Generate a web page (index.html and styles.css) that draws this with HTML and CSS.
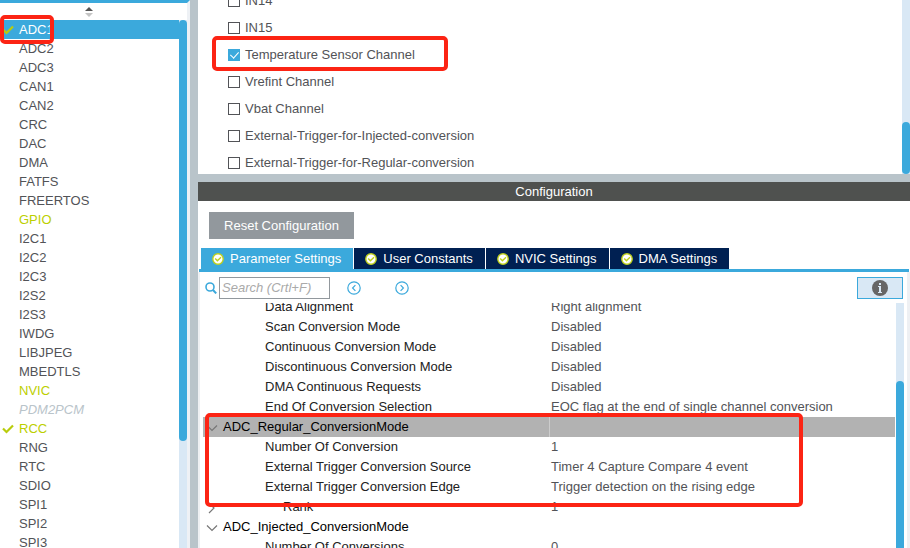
FILE: index.html
```html
<!DOCTYPE html>
<html lang="en">
<head>
<meta charset="utf-8">
<title>ADC1 Configuration</title>
<link rel="stylesheet" href="styles.css">
</head>
<body>
<svg class="defs" aria-hidden="true">
  <symbol id="tick" viewBox="0 0 12 10"><path d="M1 4.5 4.5 8 11 1.5" fill="none" stroke="#b9cc0c" stroke-width="2.2"/></symbol>
  <symbol id="ok" viewBox="0 0 12 12"><circle cx="6" cy="6" r="5.2" fill="#fff" stroke="#bfd11b" stroke-width="1.4"/><path d="M3.2 5.6 5.4 7.8 9 4.2" fill="none" stroke="#bfd11b" stroke-width="1.4"/></symbol>
  <symbol id="down" viewBox="0 0 12 12"><path d="M1 3.5 6 8.5 11 3.5" fill="none" stroke="#777" stroke-width="1.2"/></symbol>
  <symbol id="right" viewBox="0 0 12 12"><path d="M3 1 8 6 3 11" fill="none" stroke="#777" stroke-width="1.2"/></symbol>
</svg>
<div class="app">
  <aside class="sidebar">
    <button class="sort" aria-label="Sort"><svg width="8" height="10" viewBox="0 0 8 10"><path d="M0 4 4 0 8 4Z" fill="#555"/><path d="M0 6 4 10 8 6Z" fill="#c4c4c4"/></svg></button>
    <div class="side-body">
      <ul class="modules">
        <li class="selected"><svg class="tick"><use href="#tick"/></svg>ADC1</li>
        <li>ADC2</li>
        <li>ADC3</li>
        <li>CAN1</li>
        <li>CAN2</li>
        <li>CRC</li>
        <li>DAC</li>
        <li>DMA</li>
        <li>FATFS</li>
        <li>FREERTOS</li>
        <li class="on">GPIO</li>
        <li>I2C1</li>
        <li>I2C2</li>
        <li>I2C3</li>
        <li>I2S2</li>
        <li>I2S3</li>
        <li>IWDG</li>
        <li>LIBJPEG</li>
        <li>MBEDTLS</li>
        <li class="on">NVIC</li>
        <li class="off">PDM2PCM</li>
        <li class="on"><svg class="tick"><use href="#tick"/></svg>RCC</li>
        <li>RNG</li>
        <li>RTC</li>
        <li>SDIO</li>
        <li>SPI1</li>
        <li>SPI2</li>
        <li>SPI3</li>
      </ul>
      <div class="track"><div class="thumb thumb-side"></div></div>
    </div>
    <div class="mark mark-module"></div>
  </aside>
  <main class="main">
    <section class="mode">
      <div class="channels">
        <label><input type="checkbox">IN14</label>
        <label><input type="checkbox">IN15</label>
        <label><input type="checkbox" checked>Temperature Sensor Channel</label>
        <label><input type="checkbox">Vrefint Channel</label>
        <label><input type="checkbox">Vbat Channel</label>
        <label><input type="checkbox">External-Trigger-for-Injected-conversion</label>
        <label><input type="checkbox">External-Trigger-for-Regular-conversion</label>
      </div>
      <div class="track"><div class="thumb thumb-mode"></div></div>
      <div class="mark mark-channel"></div>
    </section>
    <h1 class="title">Configuration</h1>
    <section class="config">
      <button class="reset">Reset Configuration</button>
      <nav class="tabs">
        <button class="tab active"><svg class="ok"><use href="#ok"/></svg>Parameter Settings</button>
        <button class="tab"><svg class="ok"><use href="#ok"/></svg>User Constants</button>
        <button class="tab"><svg class="ok"><use href="#ok"/></svg>NVIC Settings</button>
        <button class="tab"><svg class="ok"><use href="#ok"/></svg>DMA Settings</button>
      </nav>
      <div class="panel">
        <div class="tools">
          <label class="glass" for="search"><svg width="12" height="12" viewBox="0 0 12 12" fill="none" stroke="#3ba9dc"><circle cx="5" cy="5" r="4" stroke-width="1.6"/><path d="M8 8 11.2 11.4" stroke-width="2"/></svg></label>
          <input id="search" class="search" type="text" placeholder="Search (Crtl+F)" aria-label="Search">
          <button class="step" aria-label="Previous"><svg width="14" height="14" viewBox="0 0 14 14" fill="none" stroke="#3ba9dc" stroke-width="1.2"><circle cx="7" cy="7" r="6.2"/><path d="M8.4 4.2 5.6 7l2.8 2.8"/></svg></button>
          <button class="step" aria-label="Next"><svg width="14" height="14" viewBox="0 0 14 14" fill="none" stroke="#3ba9dc" stroke-width="1.2"><circle cx="7" cy="7" r="6.2"/><path d="M5.6 4.2 8.4 7 5.6 9.8"/></svg></button>
          <button class="info" aria-label="Information"><svg width="16" height="16" viewBox="0 0 16 16"><circle cx="8" cy="8" r="8" fill="#666"/><path d="M7 3h2v2H7zM6 6h3v6h1v1H6v-1h1V7H6z" fill="#d9e8f5"/></svg></button>
        </div>
        <div class="grid-wrap">
          <div class="grid">
            <table>
              <colgroup><col class="c-name"><col></colgroup>
              <tbody>
                <tr><td>Data Alignment</td><td>Right alignment</td></tr>
                <tr><td>Scan Conversion Mode</td><td>Disabled</td></tr>
                <tr><td>Continuous Conversion Mode</td><td>Disabled</td></tr>
                <tr><td>Discontinuous Conversion Mode</td><td>Disabled</td></tr>
                <tr><td>DMA Continuous Requests</td><td>Disabled</td></tr>
                <tr><td>End Of Conversion Selection</td><td>EOC flag at the end of single channel conversion</td></tr>
                <tr class="group current"><th scope="row"><svg class="arrow"><use href="#down"/></svg>ADC_Regular_ConversionMode</th><td></td></tr>
                <tr><td>Number Of Conversion</td><td>1</td></tr>
                <tr><td>External Trigger Conversion Source</td><td>Timer 4 Capture Compare 4 event</td></tr>
                <tr><td>External Trigger Conversion Edge</td><td>Trigger detection on the rising edge</td></tr>
                <tr class="nested"><td><svg class="arrow"><use href="#right"/></svg>Rank</td><td>1</td></tr>
                <tr class="group"><th scope="row"><svg class="arrow"><use href="#down"/></svg>ADC_Injected_ConversionMode</th><td></td></tr>
                <tr><td>Number Of Conversions</td><td>0</td></tr>
              </tbody>
            </table>
          </div>
          <div class="track"><div class="thumb thumb-grid"></div></div>
          <div class="mark mark-regular"></div>
        </div>
      </div>
    </section>
  </main>
</div>
</body>
</html>
```
FILE: styles.css
```css
* { box-sizing: border-box; }

body {
  margin: 0;
  background: #fff;
  color: #525357;
  font: 13px/20px "Liberation Sans", Arial, sans-serif;
}

button, input { font: inherit; margin: 0; padding: 0; }
button { border: 0; background: none; cursor: pointer; }
svg { flex: none; display: block; }
.defs { position: absolute; width: 0; height: 0; }

.app { display: flex; height: 100vh; overflow: hidden; }

/* Module list */
.sidebar {
  position: relative;
  display: flex;
  flex-direction: column;
  flex: none;
  width: 190px;
  border-top: 3px solid #3ba9dc;
  border-right: 3px solid #eef1f5;
}
.sort {
  display: flex;
  justify-content: center;
  align-items: center;
  flex: none;
  height: 17px;
  padding-right: 10px;
}
.side-body { display: flex; flex: 1; min-height: 0; }
.modules { flex: 1; margin: 0; padding: 0; list-style: none; }
.modules li {
  display: flex;
  align-items: center;
  height: 19px;
  padding-left: 19px;
  line-height: 18px;
}
.modules .tick { width: 12px; height: 10px; margin: 0 5px 0 -17px; }
.modules .selected { background: #3ba9dc; color: #fff; }
.modules .on { color: #bccf00; }
.modules .off { color: #b9c4ca; font-style: italic; }

.track { flex: none; width: 8px; background: #d9e8f5; }
.thumb { border-radius: 4px; background: #3ba9dc; }
.thumb-side { height: 421px; }
.thumb-mode { height: 52px; }
.thumb-grid { height: 100%; border-radius: 4px 4px 0 0; }

/* Right side */
.main {
  display: flex;
  flex-direction: column;
  flex: 1;
  min-width: 0;
  border-left: 8px solid #b9c4ca;
}
.mode {
  position: relative;
  display: flex;
  flex: none;
  height: 174px;
  overflow: hidden;
}
.mode .track { display: flex; flex-direction: column; justify-content: flex-end; }
.channels { flex: 1; margin-top: -13px; padding-left: 30px; }
.channels label { display: flex; align-items: center; gap: 5px; height: 27px; }
.channels input {
  appearance: none;
  width: 12px;
  height: 12px;
  border: 1px solid #525357;
}
.channels input:checked {
  border-color: #3ba9dc;
  background: #3ba9dc;
}
.channels input:checked::before {
  content: "";
  display: block;
  width: 4px;
  height: 7px;
  margin: 0 0 0 3px;
  border: solid #fff;
  border-width: 0 1px 1px 0;
  transform: rotate(42deg);
}

.title {
  flex: none;
  margin: 0;
  border-top: 8px solid #b9c4ca;
  background: #4f514f;
  color: #fff;
  font-size: 13px;
  font-weight: normal;
  line-height: 19px;
  text-align: center;
}

.config {
  display: flex;
  flex-direction: column;
  flex: 1;
  min-height: 0;
  padding-top: 11px;
}
.reset {
  align-self: flex-start;
  width: 145px;
  height: 27px;
  margin-left: 11px;
  background: #92989d;
  color: #fff;
}
.tabs {
  display: flex;
  gap: 1px;
  flex: none;
  height: 24px;
  margin: 9px 1px 0;
  padding-left: 2px;
  border-bottom: 3px solid #3ba9dc;
}
.tab {
  display: flex;
  align-items: center;
  gap: 6px;
  padding: 0 12px 0 11px;
  background: #002052;
  color: #fff;
}
.tab.active { background: #3ba9dc; }
.ok { width: 12px; height: 12px; }

.panel {
  display: flex;
  flex-direction: column;
  flex: 1;
  min-height: 0;
  border: solid #eef0f3;
  border-width: 0 3px 0 2px;
}
.tools {
  display: flex;
  align-items: center;
  flex: none;
  height: 31px;
  padding: 0 4px 0 5px;
}
.search {
  width: 111px;
  height: 22px;
  margin: 0 17px 0 2px;
  padding: 0 2px;
  border: 1px solid #92989d;
  border-radius: 0;
  outline: none;
}
.search::placeholder { color: #aaa; font-style: italic; opacity: 1; }
.step { margin-right: 34px; }
.info {
  display: flex;
  align-items: center;
  justify-content: center;
  width: 46px;
  height: 22px;
  margin-left: auto;
  border: 1px solid #3ba9dc;
  background: #d9e8f5;
}

/* Parameters */
.grid-wrap {
  position: relative;
  display: flex;
  gap: 1px;
  flex: 1;
  min-height: 0;
  padding: 0 3px;
}
.grid-wrap .track { padding-top: 78px; }
.grid { flex: 1; overflow: hidden; }
table {
  width: 100%;
  margin-top: -6px;
  table-layout: fixed;
  border-collapse: collapse;
}
.c-name { width: 50%; }
tr { height: 20px; }
td, th {
  padding: 0;
  font-weight: normal;
  text-align: left;
  white-space: nowrap;
}
td:first-child { padding-left: 62px; color: #222; }
td:last-child { padding-left: 2px; }
th { color: #000; }
.group th, .nested td:first-child { padding-left: 3px; }
.arrow {
  display: inline-block;
  width: 12px;
  height: 12px;
  margin-right: 5px;
  vertical-align: middle;
}
.nested .arrow { margin-right: 65px; }
.current { background: #b2b2b2; }
.current td { border-left: 1px solid #ccc; }

/* Highlight frames lying over the content */
.mark {
  position: absolute;
  border: 4px solid #fc2414;
  border-radius: 5px;
  pointer-events: none;
}
.mark-module { top: 12px; left: 0; width: 54px; height: 29px; }
.mark-channel { top: 36px; left: 14px; width: 236px; height: 35px; }
.mark-regular { top: 110px; left: 5px; width: 598px; height: 94px; }
```
